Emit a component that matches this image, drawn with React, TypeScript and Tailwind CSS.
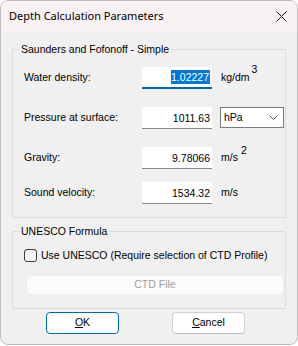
import React from "react";

const lbl = "font-['Liberation_Sans',Arial,sans-serif] text-[10.5px] text-black";

function Field({ value, selected }: { value: string; selected?: boolean }) {
  return (
    <div
      className={`w-[70px] h-[22px] bg-white flex items-center justify-end pr-[2px] ${
        selected ? "border-b-2 border-[#0067c0]" : "border-b border-[#8a8a8a]"
      }`}
    >
      {selected ? (
        <span className="flex items-center">
          <span className="bg-[#0078d7] text-white leading-[14px] h-[14px] px-0">{value}</span>
          <span className="w-[1px] h-[14px] bg-[#c06000]" />
        </span>
      ) : (
        <span className="leading-[14px]">{value}</span>
      )}
    </div>
  );
}

export default function App() {
  return (
    <div className="w-[298px] h-[346px] bg-white">
      <div className="w-[298px] h-[345px] rounded-[8px] border border-[#bdbdbd] overflow-hidden flex flex-col bg-[#f0f0f0]">
        {/* Title bar */}
        <div className="h-[30px] bg-[#f9f2f2] flex items-center justify-between pl-[8px] pr-[10px] shrink-0">
          <span className="font-['Noto_Sans',sans-serif] text-[11px] text-black">
            Depth Calculation Parameters
          </span>
          <svg width="11" height="11" viewBox="0 0 11 11" className="mt-[1px]">
            <path d="M0.5 0.5 L10.5 10.5 M10.5 0.5 L0.5 10.5" stroke="#1a1a1a" strokeWidth="1" />
          </svg>
        </div>

        <div className={`flex flex-col px-[11px] pt-[18px] ${lbl}`}>
          {/* Group 1 */}
          <div className="relative border border-[#dcdcdc] h-[169px] pl-[11px] pt-[17px]">
            <span className="absolute -top-[8px] left-[7px] px-[1px] bg-[#f0f0f0] leading-[14px]">
              Saunders and Fofonoff - Simple
            </span>
            <div className="flex items-center">
              <span className="w-[118px]">Water density:</span>
              <Field value="1.02227" selected />
              <span className="ml-[9px]">
                kg/dm<span className="inline-block relative -top-[8px] ml-[2px]">3</span>
              </span>
            </div>
            <div className="flex items-center mt-[18px]">
              <span className="w-[118px]">Pressure at surface:</span>
              <Field value="1011.63" />
              <div className="ml-[8px] w-[64px] h-[21px] bg-white border border-[#7a7a7a] flex items-center justify-between pl-[3px] pr-[5px] self-start">
                <span>hPa</span>
                <svg width="9" height="6" viewBox="0 0 9 6">
                  <path d="M0.5 0.5 L4.5 4.5 L8.5 0.5" stroke="#555" strokeWidth="1" fill="none" />
                </svg>
              </div>
            </div>
            <div className="flex items-center mt-[18px]">
              <span className="w-[118px]">Gravity:</span>
              <Field value="9.78066" />
              <span className="ml-[9px]">
                m/s<span className="inline-block relative -top-[7px] ml-[3px]">2</span>
              </span>
            </div>
            <div className="flex items-center mt-[13px]">
              <span className="w-[118px]">Sound velocity:</span>
              <Field value="1534.32" />
              <span className="ml-[9px]">m/s</span>
            </div>
          </div>

          {/* Group 2 */}
          <div className="relative border border-[#dcdcdc] h-[78px] mt-[13px] pl-[11px] pr-[1px] pt-[16px]">
            <span className="absolute -top-[8px] left-[7px] px-[1px] bg-[#f0f0f0] leading-[14px]">
              UNESCO Formula
            </span>
            <div className="flex items-center">
              <span className="w-[13px] h-[13px] rounded-[3px] border border-[#3a3a3a] bg-[#f7f7f7]" />
              <span className="ml-[4px]">Use UNESCO (Require selection of CTD Profile)</span>
            </div>
            <div className="mt-[11px] ml-[2px] h-[20px] rounded-[4px] bg-[#fbfbfb] border border-[#ececec] flex items-center justify-center text-[#a0a0a0]">
              CTD File
            </div>
          </div>

          {/* Buttons */}
          <div className="flex mt-[3px]">
            <div className="ml-[34px] w-[73px] h-[22px] rounded-[4px] bg-white border border-[#0067c0] flex items-center justify-center">
              <span><span className="underline">O</span>K</span>
            </div>
            <div className="ml-[53px] w-[73px] h-[22px] rounded-[4px] bg-white border border-[#d0d0d0] border-b-[#b8b8b8] flex items-center justify-center">
              <span><span className="underline">C</span>ancel</span>
            </div>
          </div>
        </div>
      </div>
    </div>
  );
}
